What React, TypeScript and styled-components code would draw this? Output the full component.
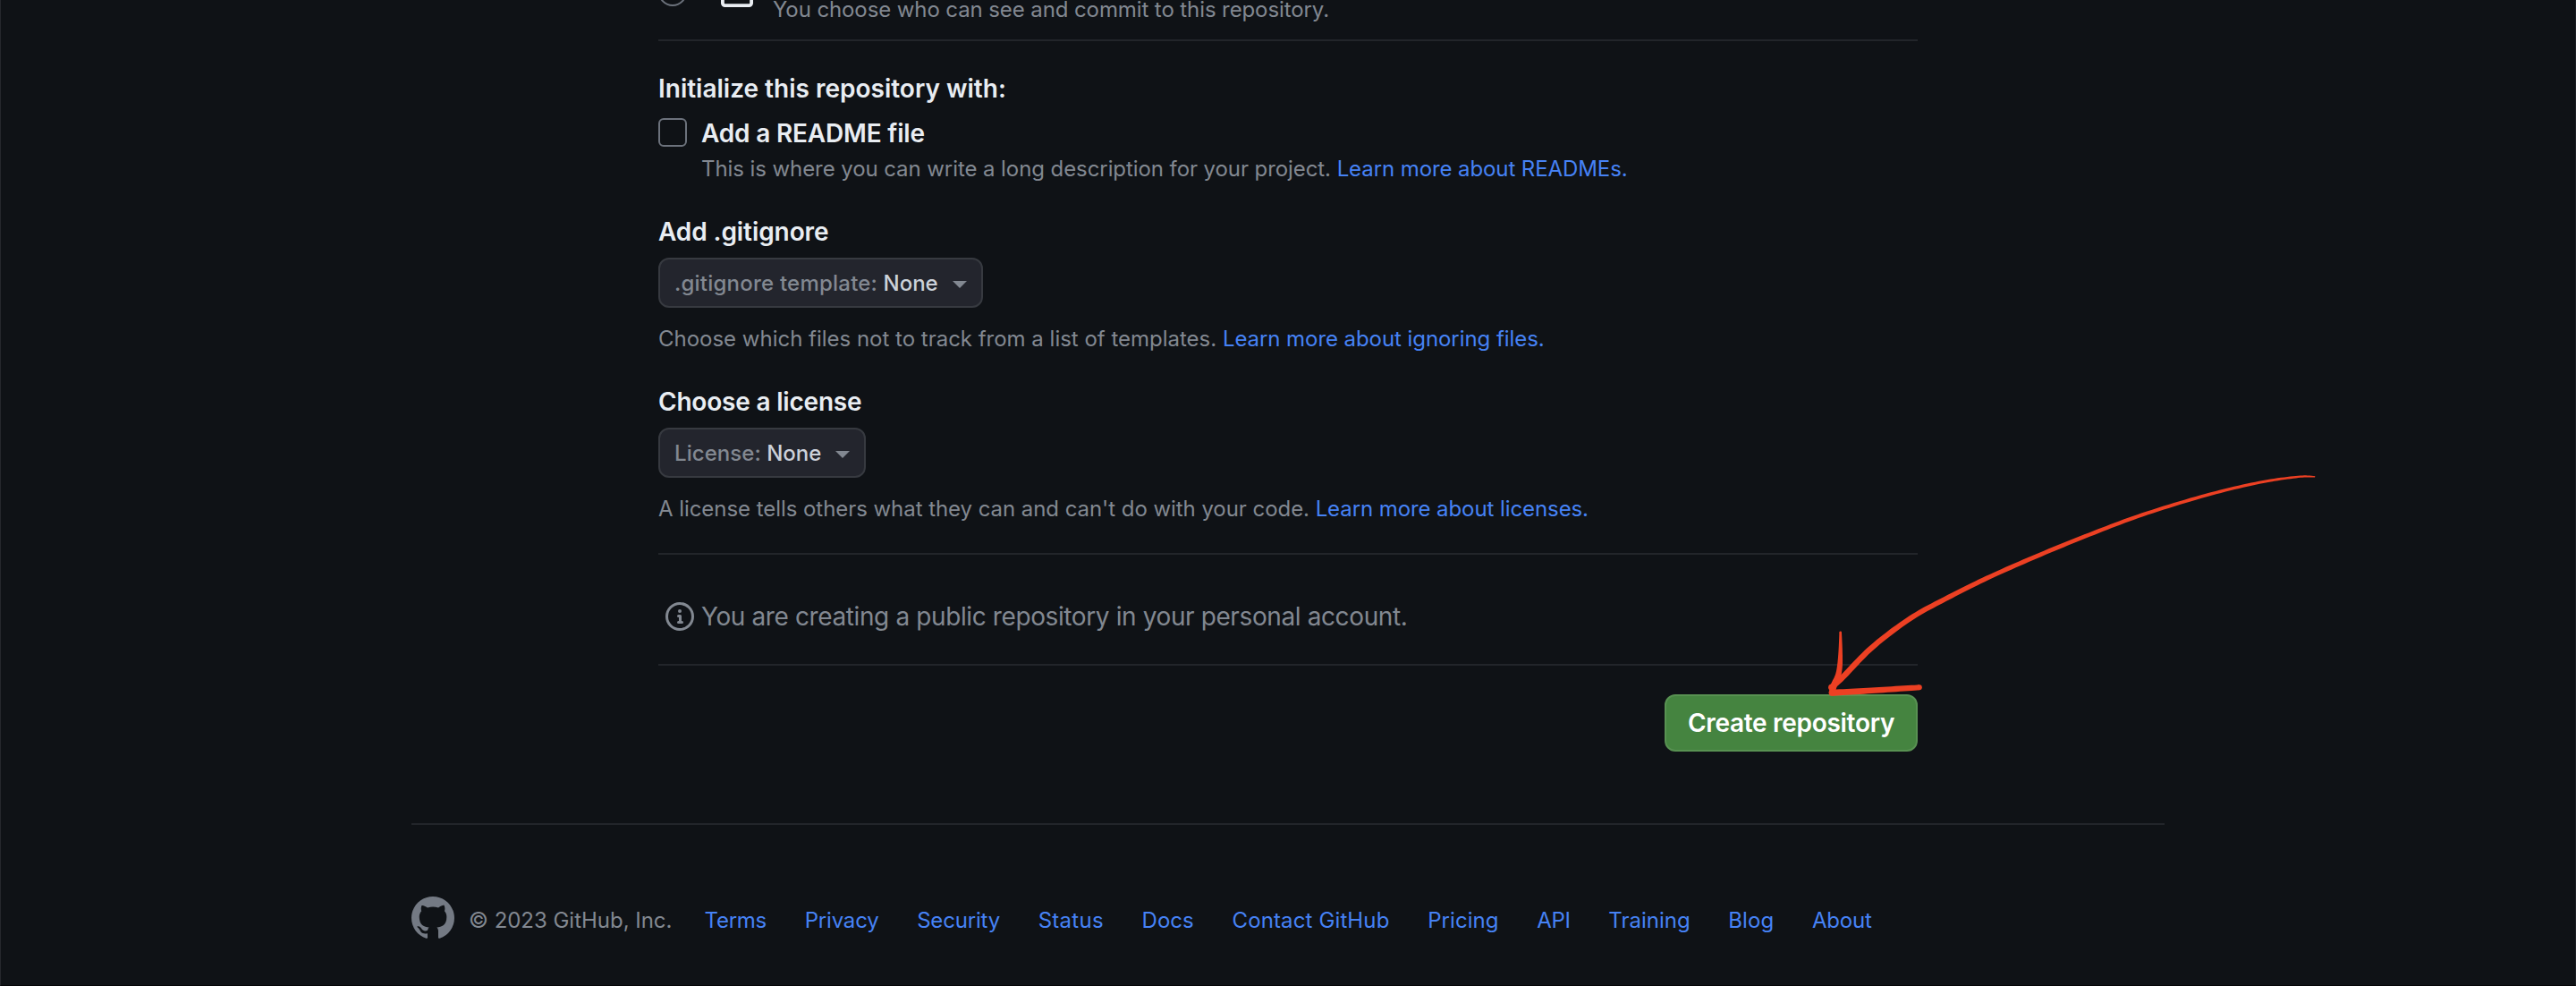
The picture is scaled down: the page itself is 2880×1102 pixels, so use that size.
import React from 'react';
import styled, { createGlobalStyle } from 'styled-components';

const color = {
  canvas: '#0f1216',
  text: '#e9edf2',
  muted: '#828891',
  link: '#4682f5',
  rule: '#22252a',
  control: '#23252d',
  controlBorder: '#373a40',
};

const GlobalStyle = createGlobalStyle`
  body {
    margin: 0;
    background: ${color.canvas};
    color: ${color.text};
    font-family: Inter, 'Liberation Sans', sans-serif;
  }
`;

const Page = styled.div`
  position: relative;
  box-sizing: border-box;
  height: 1102px;
  overflow: hidden;
  border-left: 1px solid #25272c;
  border-right: 1px solid #1d2025;
  border-bottom: 1px solid #050508;
`;

const Form = styled.main`
  display: flex;
  flex-direction: column;
  width: 1408px;
  margin: 0 auto;
`;

const VisibilityOption = styled.div`
  display: flex;
  align-items: flex-end;
  height: 64px;
  margin-top: -36px;
`;

const Radio = styled.span`
  box-sizing: border-box;
  width: 32px;
  height: 32px;
  margin: 0 32px 21px 0;
  border: 2px solid #6c727c;
  border-radius: 50%;
`;

const LockIcon = styled.svg`
  width: 48px;
  height: 48px;
  margin: 0 16px 16px 0;
`;

const Rule = styled.hr<{ $top: number; $bottom: number }>`
  width: 100%;
  height: 2px;
  margin: ${(p) => p.$top}px 0 ${(p) => p.$bottom}px;
  border: 0;
  background: ${color.rule};
`;

const Heading = styled.h2<{ $track?: number }>`
  margin: 0;
  font-size: 28px;
  font-weight: 600;
  line-height: 42px;
  letter-spacing: ${(p) => p.$track ?? 0}px;
  white-space: nowrap;
`;

const Note = styled.p<{ $track?: number; $top?: number }>`
  margin: ${(p) => p.$top ?? 0}px 0 0;
  color: ${color.muted};
  font-size: 24px;
  line-height: 35px;
  letter-spacing: ${(p) => p.$track ?? 0}px;
  white-space: nowrap;
`;

const VisibilityNote = styled(Note)`
  margin-bottom: 6px;
  line-height: 23px;
`;

const Link = styled.a<{ $track?: number }>`
  color: ${color.link};
  letter-spacing: ${(p) => p.$track ?? 0}px;
  text-decoration: none;
`;

const CheckRow = styled.div`
  display: flex;
  gap: 16px;
  margin-top: 8px;
`;

const Checkbox = styled.span`
  box-sizing: border-box;
  flex: none;
  width: 32px;
  height: 32px;
  margin-top: 4px;
  border: 2px solid #6c727c;
  border-radius: 6px;
`;

const CheckBody = styled.div`
  display: flex;
  flex-direction: column;
`;

const Section = styled.section<{ $top: number }>`
  display: flex;
  flex-direction: column;
  align-items: flex-start;
  margin-top: ${(p) => p.$top}px;
`;

const Select = styled.button<{ $width: number }>`
  display: flex;
  align-items: center;
  justify-content: space-between;
  box-sizing: border-box;
  width: ${(p) => p.$width}px;
  height: 56px;
  margin-top: 8px;
  padding: 0 16px;
  border: 2px solid ${color.controlBorder};
  border-radius: 12px;
  background: ${color.control};
  font-family: inherit;
  font-size: 24px;
  font-weight: 500;
  line-height: 35px;
  white-space: nowrap;
`;

const SelectLabel = styled.span<{ $track: number }>`
  color: ${color.muted};
  letter-spacing: ${(p) => p.$track}px;
`;

const SelectValue = styled.span`
  color: #ccd2da;
`;

const Caret = styled.span`
  margin-top: 4px;
  border: 8px solid transparent;
  border-top-color: ${color.muted};
  border-bottom: 0;
`;

const InfoRow = styled.div`
  display: flex;
  align-items: center;
  gap: 8px;
  height: 42px;
  padding-left: 8px;
  color: ${color.muted};
  font-size: 28px;
  line-height: 42px;
  letter-spacing: -0.389px;
  white-space: nowrap;
`;

const InfoIcon = styled.svg`
  width: 32px;
  height: 32px;
`;

const CreateButton = styled.button`
  align-self: flex-end;
  box-sizing: border-box;
  width: 283px;
  height: 64px;
  padding: 0;
  border: 2px solid #589152;
  border-radius: 12px;
  background: #458440;
  color: #fff;
  font-family: inherit;
  font-size: 28px;
  font-weight: 600;
  line-height: 42px;
  letter-spacing: -0.298px;
  white-space: nowrap;
`;

const Footer = styled.footer`
  width: 1960px;
  margin: 80px auto 0;
`;

const FooterRow = styled.div`
  display: flex;
  align-items: flex-start;
`;

const Mark = styled.svg`
  width: 48px;
  height: 48px;
  margin-right: 16px;
`;

const FooterNav = styled.nav`
  display: flex;
  gap: 42.7px;
  margin: 9px 0 0 36.2px;
  font-size: 24px;
  line-height: 35px;
  white-space: nowrap;
`;

const Annotation = styled.svg`
  position: absolute;
  left: 2019px;
  top: 500px;
  width: 600px;
  height: 300px;
  pointer-events: none;
`;

type Sample = [x: number, y: number, width: number];

/** Builds the outline of a pen stroke whose width changes along its centre line. */
function brush(points: Sample[]): string {
  const dense: Sample[] = [];
  const steps = 12;
  for (let i = 0; i < points.length - 1; i++) {
    const a = points[Math.max(i - 1, 0)];
    const b = points[i];
    const c = points[i + 1];
    const d = points[Math.min(i + 2, points.length - 1)];
    for (let s = 0; s < steps; s++) {
      const t = s / steps;
      dense.push(
        [0, 1, 2].map(
          (k) =>
            0.5 *
            (2 * b[k] +
              (c[k] - a[k]) * t +
              (2 * a[k] - 5 * b[k] + 4 * c[k] - d[k]) * t * t +
              (3 * b[k] - a[k] - 3 * c[k] + d[k]) * t * t * t),
        ) as Sample,
      );
    }
  }
  dense.push(points[points.length - 1]);
  const left: string[] = [];
  const right: string[] = [];
  dense.forEach(([x, y, w], i) => {
    const p = dense[Math.max(i - 1, 0)];
    const n = dense[Math.min(i + 1, dense.length - 1)];
    const len = Math.hypot(n[0] - p[0], n[1] - p[1]) || 1;
    const nx = (-(n[1] - p[1]) / len) * (w / 2);
    const ny = ((n[0] - p[0]) / len) * (w / 2);
    left.push(`${(x + nx).toFixed(2)} ${(y + ny).toFixed(2)}`);
    right.unshift(`${(x - nx).toFixed(2)} ${(y - ny).toFixed(2)}`);
  });
  return `M${left.join('L')}L${right.join('L')}Z`;
}

const strokes: Sample[][] = [
  [
    [2587.6, 532.8, 1.6],
    [2569.4, 532.9, 2.4],
    [2525.9, 539.3, 3.1],
    [2466.6, 553.5, 3.6],
    [2395.4, 575.3, 4.1],
    [2336.1, 597.5, 4.5],
    [2276.8, 621.7, 4.9],
    [2221.4, 646.2, 5.2],
    [2178, 667.8, 5.5],
    [2136, 691, 5.8],
    [2093.3, 723.3, 6.2],
    [2060, 757, 6.6],
    [2047.4, 768.3, 6.6],
  ],
  [
    [2057.7, 706.8, 2.6],
    [2057.7, 726.7, 4.3],
    [2057, 743.3, 5.8],
    [2055, 755, 6.4],
    [2050.7, 765, 7],
    [2048.2, 774, 7],
  ],
  [
    [2048.2, 774.3, 7],
    [2096.7, 771.5, 6.6],
    [2145.8, 768.3, 6],
  ],
];

const footerLinks: [label: string, track: number][] = [
  ['Terms', -0.25],
  ['Privacy', -0.2],
  ['Security', -0.19],
  ['Status', 0.28],
  ['Docs', 0.03],
  ['Contact GitHub', 0.13],
  ['Pricing', 0.06],
  ['API', -0.34],
  ['Training', 0],
  ['Blog', 0.1],
  ['About', -0.23],
];

export default function App() {
  return (
    <Page>
      <GlobalStyle />
      <Form>
        <VisibilityOption>
          <Radio />
          <LockIcon viewBox="0 0 24 24" fill="none" stroke={color.text} strokeWidth="1.9">
            <rect x="3.95" y="9.95" width="16.1" height="11.1" rx="1.3" />
            <path d="M7 10V7.2C7 4.2 9.1 2 12 2s5 2.200 5 5.200V10" />
          </LockIcon>
          <VisibilityNote $track={-0.1}>
            You choose who can see and commit to this repository.
          </VisibilityNote>
        </VisibilityOption>
        <Rule $top={16} $bottom={32} />

        <Heading>Initialize this repository with:</Heading>
        <CheckRow>
          <Checkbox />
          <CheckBody>
            <Heading $track={-0.183}>Add a README file</Heading>
            <Note $track={-0.08} $top={1}>
              This is where you can write a long description for your project.{' '}
              <Link href="#" $track={-0.09}>Learn more about READMEs.</Link>
            </Note>
          </CheckBody>
        </CheckRow>

        <Section $top={32}>
          <Heading $track={-0.086}>Add .gitignore</Heading>
          <Select $width={363}>
            <span>
              <SelectLabel $track={0.22}>.gitignore template:</SelectLabel>{' '}
              <SelectValue>None</SelectValue>
            </span>
            <Caret />
          </Select>
          <Note $track={-0.01} $top={17}>
            Choose which files not to track from a list of templates.{' '}
            <Link href="#" $track={-0.065}>Learn more about ignoring files.</Link>
          </Note>
        </Section>

        <Section $top={32}>
          <Heading $track={-0.202}>Choose a license</Heading>
          <Select $width={232}>
            <span>
              <SelectLabel $track={0.06}>License:</SelectLabel> <SelectValue>None</SelectValue>
            </span>
            <Caret />
          </Select>
          <Note $track={-0.055} $top={17}>
            A license tells others what they can and can't do with your code.{' '}
            <Link href="#" $track={-0.084}>Learn more about licenses.</Link>
          </Note>
        </Section>
        <Rule $top={32} $bottom={48} />

        <InfoRow>
          <InfoIcon viewBox="0 0 16 16" fill="currentColor">
            <path d="M0 8a8 8 0 1 1 16 0A8 8 0 0 1 0 8Zm8-6.5a6.5 6.5 0 1 0 0 13 6.5 6.5 0 0 0 0-13ZM6.5 7.75A.75.75 0 0 1 7.25 7h1a.75.75 0 0 1 .75.75v2.750h.25a.75.75 0 0 1 0 1.5h-2a.75.75 0 0 1 0-1.5h.25v-2h-.25a.75.75 0 0 1-.75-.75ZM8 6a1 1 0 1 1 0-2 1 1 0 0 1 0 2Z" />
          </InfoIcon>
          <span>You are creating a public repository in your personal account.</span>
        </InfoRow>
        <Rule $top={32} $bottom={32} />
        <CreateButton>Create repository</CreateButton>
      </Form>

      <Footer>
        <Rule $top={0} $bottom={80} />
        <FooterRow>
          <Mark viewBox="0 0 16 16" fill="#747a84">
            <path d="M8 0C3.58 0 0 3.58 0 8c0 3.54 2.29 6.53 5.47 7.59.4.07.55-.17.55-.38 0-.19-.01-.82-.01-1.49-2.01.37-2.53-.49-2.69-.94-.09-.23-.48-.94-.82-1.13-.28-.15-.68-.52-.01-.53.63-.01 1.08.58 1.23.82.72 1.21 1.87.87 2.33.66.07-.52.28-.87.51-1.07-1.78-.2-3.64-.89-3.64-3.95 0-.87.31-1.59.82-2.15-.08-.2-.36-1.02.08-2.12 0 0 .67-.21 2.2.82.64-.18 1.32-.27 2-.27.68 0 1.36.09 2 .27 1.53-1.04 2.2-.82 2.2-.82.44 1.1.16 1.92.08 2.12.51.56.82 1.27.82 2.15 0 3.07-1.87 3.75-3.65 3.95.29.25.54.73.54 1.48 0 1.070-.01 1.930-.01 2.200 0 .21.15.46.55.38A8.013 8.013 0 0 0 16 8c0-4.420-3.580-8-8-8z" />
          </Mark>
          <Note $track={-0.026} $top={9}>© 2023 GitHub, Inc.</Note>
          <FooterNav>
            {footerLinks.map(([label, track]) => (
              <Link key={label} href="#" $track={track}>
                {label}
              </Link>
            ))}
          </FooterNav>
        </FooterRow>
      </Footer>

      <Annotation viewBox="2020 500 600 300" fill="#ec4023">
        {strokes.map((points, i) => (
          <React.Fragment key={i}>
            <path d={brush(points)} />
            {[points[0], points[points.length - 1]].map(([x, y, w], end) => (
              <circle key={end} cx={x} cy={y} r={w / 2} />
            ))}
          </React.Fragment>
        ))}
      </Annotation>
    </Page>
  );
}
